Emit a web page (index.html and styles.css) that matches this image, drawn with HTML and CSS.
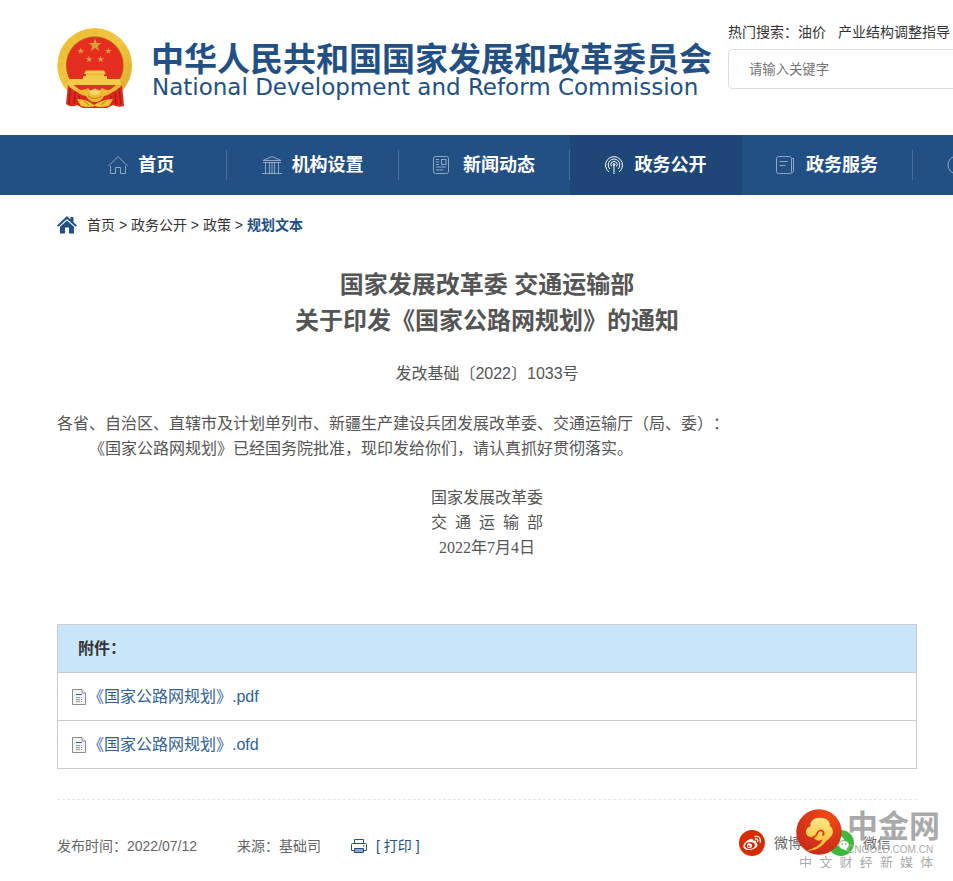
FILE: index.html
```html
<!DOCTYPE html>
<html lang="zh-CN">
<head>
  <meta charset="UTF-8">
  <title>国家公路网规划</title>
  <link rel="stylesheet" href="styles.css">
</head>
<body>
  <header class="header">
    <a class="logo" href="#">
      <svg class="emblem" viewBox="0 0 76 81" aria-hidden="true">
        <defs>
          <linearGradient id="gold" x1="0" y1="0" x2="1" y2="1">
            <stop offset="0" stop-color="#edbb35"/>
            <stop offset=".5" stop-color="#f3c943"/>
            <stop offset="1" stop-color="#d9a425"/>
          </linearGradient>
          <path id="star" d="M0-7 1.6-2.2H6.7L2.6.8 4.1 5.7 0 2.7-4.1 5.7-2.6.8-6.7-2.2H-1.6Z"/>
        </defs>
        <circle cx="37.7" cy="37.5" r="37.4" fill="url(#gold)"/>
        <circle cx="37.7" cy="37.5" r="33" fill="none" stroke="#dda52a" stroke-width="4" stroke-dasharray="5 4 2 6" opacity=".2"/>
        <circle cx="37.8" cy="37.2" r="29" fill="#b8781c"/>
        <circle cx="37.8" cy="37.5" r="28.3" fill="#e62e20"/>
        <g fill="#d9a03a">
          <use href="#star" transform="translate(38 17.3)"/>
          <use href="#star" transform="translate(23.7 23) scale(.5)"/>
          <use href="#star" transform="translate(51.3 23) scale(.5)"/>
          <use href="#star" transform="translate(32 31.3) scale(.5)"/>
          <use href="#star" transform="translate(43.7 31.3) scale(.5)"/>
        </g>
        <path fill="#f3cb48" d="M29 42.5H47L49 46H27ZM29 46H47V48H29ZM26 48H50V51H63L64 57H12L13 51H26Z"/>
        <path d="M29 46.2H48" stroke="#d99a2c" stroke-width=".6"/>
        <path d="M11 57Q16 64 28 66L37.700 67 48 66Q60 64 65 57L67 78Q62 80 56 77L50 80H26L20 77Q14 80 9 76Z" fill="#da281d"/>
        <path d="M13 60 12 76M18 64 17 76M62 60 64 76M58 64 59 76M22 68 25 78M54 68 51 78" stroke="#a91812" stroke-width="1.200"/>
        <path d="M16 60Q25 64 31 60Q35 65 38 60Q41 65 45 60Q51 64 60 60Q53 67 47 68Q44 74 38 74Q32 74 29 68Q22 67 16 60Z" fill="#edb832"/>
        <path d="M32 64Q38 58 44 64L41 67H35Z" fill="#f7d767"/>
        <path d="M31 68Q38 73 45 68" fill="none" stroke="#c77d1c"/>
        <path d="M20 71Q30 71 37 77Q46 71 56 71L52 78Q42 80 38 78Q32 80 24 78Z" fill="#f1c13a"/>
        <path d="M27 73 32 77M49 73 44 77" stroke="#c77d1c"/>
      </svg>
      <span class="logo-text">
        <strong class="logo-cn">中华人民共和国国家发展和改革委员会</strong>
        <span class="logo-en">National Development and Reform Commission</span>
      </span>
    </a>
    <form class="search">
      <div class="hot">热门搜索：<a href="#">油价</a><a href="#">产业结构调整指导</a></div>
      <input class="search-input" type="text" placeholder="请输入关键字" aria-label="请输入关键字">
    </form>
  </header>

  <nav class="nav">
    <ul class="nav-list">
      <li><a href="#">
        <svg class="nav-icon" viewBox="0 0 20 20"><path d="M.5 11 10 1.500 19.500 11M2.500 11V18.500H7.500V12.500H12.500V18.500H17.500V11"/></svg>首页</a></li>
      <li><a href="#">
        <svg class="nav-icon" viewBox="0 0 20 20"><path d="M1 5.500 10 1.500 19 5.500ZM1 7.500H19M0 18.500H20M3.500 8V18M7.500 8V18M10 8V18M12.500 8V18M16.500 8V18"/></svg>机构设置</a></li>
      <li><a href="#">
        <svg class="nav-icon" viewBox="0 0 20 20"><rect x=".5" y="1.500" width="15" height="17" rx="2"/><path d="M3 4.500H6M3 7H6M3 9.500H6M3 12H13M3 15H10"/><rect x="8.500" y="4.500" width="4.500" height="5"/></svg>新闻动态</a></li>
      <li class="active"><a href="#">
        <svg class="nav-icon" viewBox="0 0 20 20"><path d="M5 17A8.500 8.500 0 1 1 15 17M6 14A5.800 5.800 0 1 1 14 14M7.500 11.500A3.200 3.200 0 1 1 12.500 11.500M10 9V19"/><circle cx="10" cy="9.500" r="1"/></svg>政务公开</a></li>
      <li><a href="#">
        <svg class="nav-icon" viewBox="0 0 20 20"><rect x=".5" y="1.500" width="15" height="17" rx="2"/><path d="M3.500 6.500H11.500M3.500 10.500H9.500M16 3.500H17.500V16.500L15.500 18.500"/></svg>政务服务</a></li>
      <li><a href="#" aria-label="互动交流">
        <svg class="nav-icon" viewBox="0 0 20 20"><circle cx="10" cy="10" r="9"/></svg></a></li>
    </ul>
  </nav>

  <main class="main">
    <div class="crumbs">
      <svg class="home-icon" viewBox="0 0 20 18"><path d="M10 0 13.500 3.400V1H16.500V6.200L20 9.600 18.500 10.700 10 3 1.500 10.700 0 9.600Z"/><path d="M10 4.500 17 10.700V17.500H12V11.500H8V17.500H3V10.700Z"/></svg>
      <span><a href="#">首页</a> &gt; <a href="#">政务公开</a> &gt; <a href="#">政策</a> &gt; <a class="current" href="#">规划文本</a></span>
    </div>

    <article>
      <h1 class="title">国家发展改革委 交通运输部<br>关于印发《国家公路网规划》的通知</h1>
      <p class="number">发改基础〔2022〕1033号</p>
      <div class="content">
        <p>各省、自治区、直辖市及计划单列市、新疆生产建设兵团发展改革委、交通运输厅（局、委）：</p>
        <p class="indent">《国家公路网规划》已经国务院批准，现印发给你们，请认真抓好贯彻落实。</p>
        <p class="sign">国家发展改革委<br>交&nbsp; 通&nbsp; 运&nbsp; 输&nbsp; 部<br>2022年7月4日</p>
      </div>
    </article>

    <section class="attach">
      <h2>附件：</h2>
      <ul>
        <li><svg class="file-icon" viewBox="0 0 14 16"><path d="M.5.500H10L13.500 4V15.500H.5Z" fill="#f5f3f1" stroke="#8b8b8b"/><path d="M10 .5V4H13.500" fill="#fff" stroke="#8b8b8b"/><path d="M4 5.500H10" stroke="#2d5fc4"/><path d="M4 8.500H8M9 8.500H10M4 10.500H8M9 10.500H10M4 12.500H8M9 12.500H10" stroke="#999"/></svg><a href="#">《国家公路网规划》.pdf</a></li>
        <li><svg class="file-icon" viewBox="0 0 14 16"><path d="M.5.500H10L13.500 4V15.500H.5Z" fill="#f5f3f1" stroke="#8b8b8b"/><path d="M10 .5V4H13.500" fill="#fff" stroke="#8b8b8b"/><path d="M4 5.500H10" stroke="#2d5fc4"/><path d="M4 8.500H8M9 8.500H10M4 10.500H8M9 10.500H10M4 12.500H8M9 12.500H10" stroke="#999"/></svg><a href="#">《国家公路网规划》.ofd</a></li>
      </ul>
    </section>

    <footer class="info">
      <div class="meta">
        <span>发布时间：2022/07/12</span>
        <span>来源：基础司</span>
        <button class="print" type="button">
          <svg viewBox="0 0 16 16"><path d="M3.500 6V1.500H12.500V6M3 12.500H.500V6.500Q.5 5.500 1.500 5.500H14.500Q15.500 5.500 15.500 6.500V12.500H13"/><path d="M3.500 10.500H12.500V14.500H3.500Z" fill="#8ea7c4"/><path d="M12 8H13.500"/></svg>[ 打印 ]
        </button>
      </div>
      <div class="share">
        <a href="#">
          <svg viewBox="0 0 26 26"><circle cx="13" cy="13" r="13" fill="#d92b00"/><path d="M10.500 9.300C13 8 14.500 9 13.900 10.700 17 9.800 18 11 17 13 19 13.500 19 16 17 17.600 14 20.600 6.500 21 4.600 17.400 3.600 14.500 7 11 10.500 9.300Z" fill="#fff"/><ellipse cx="11" cy="15.500" rx="5" ry="3.500" fill="#d92b00" transform="rotate(-8 11 15.500)"/><circle cx="10.500" cy="15.800" r="2.500" fill="#fff"/><circle cx="9.800" cy="16.300" r="1" fill="#d92b00"/><path d="M16 6.500Q22 5.500 21.300 12M16.300 9Q19.200 8.700 18.700 11.500" fill="none" stroke="#fff" stroke-width="1.300" stroke-linecap="round"/></svg>微博</a>
        <a href="#">
          <svg viewBox="0 0 26 26"><circle cx="13" cy="13" r="13" fill="#3cb93c"/><ellipse cx="10.500" cy="11" rx="6" ry="5" fill="#fff"/><ellipse cx="16" cy="15" rx="5.300" ry="4.500" fill="#fff" stroke="#3cb93c" stroke-width=".8"/><path d="M18 18 19.500 21 15 19Z" fill="#fff"/><g fill="#3cb93c"><circle cx="14.300" cy="14" r=".8"/><circle cx="17.700" cy="14" r=".8"/></g></svg>微信</a>
      </div>
      <div class="watermark">
        <svg class="wm-logo" viewBox="0 0 46 46">
          <defs>
            <radialGradient id="ball" cx=".7" cy=".15" r=".9"><stop offset="0" stop-color="#f04a12"/><stop offset="1" stop-color="#c9291b"/></radialGradient>
            <linearGradient id="cloud" x1="0" y1="0" x2="0" y2="1"><stop offset="0" stop-color="#ffe98a"/><stop offset="1" stop-color="#fbb723"/></linearGradient>
          </defs>
          <circle cx="23" cy="23" r="22.700" fill="url(#ball)"/>
          <path d="M10.500 41.500C18 39.500 25 36 26.500 30.500 23 33 18 31 17.500 28 13 29 9.500 26 10 22.500 10.500 19 12 18 14.500 17.500 13.500 11.500 19 8.500 24 8.700 30 8.700 34.500 12 34 17 37.500 19.500 38 25 34.500 28 33 30 31.500 31 30 32 26 38 19 42.500 10.500 41.500Z" fill="url(#cloud)"/>
          <path d="M17.500 28C22 27.500 20 22.500 24 21.500 27.500 21 28.500 24 27 26" fill="none" stroke="#d23c18" stroke-width="1.800" stroke-linecap="round"/>
        </svg>
        <div class="wm-name">中金网</div>
        <div class="wm-url">CNGOLD.COM.CN</div>
        <div class="wm-slogan">中&nbsp; 文&nbsp; 财&nbsp; 经&nbsp; 新&nbsp; 媒&nbsp; 体</div>
      </div>
    </footer>
  </main>
</body>
</html>
```
FILE: styles.css
```css
* {
  box-sizing: border-box;
}

body {
  margin: 0;
  background: #fff;
  color: #333;
  font-family: "Liberation Sans", "Noto Sans CJK SC", sans-serif;
  font-size: 14px;
  line-height: 20px;
  text-spacing-trim: space-all;
}

a {
  color: inherit;
  text-decoration: none;
}

ul,
p,
h1,
h2 {
  margin: 0;
  padding: 0;
  list-style: none;
}

/* header */
.header {
  display: flex;
  gap: 16px;
  padding: 22px 0 26px 57px;
  overflow: hidden;
}

.logo {
  display: flex;
  flex: none;
  gap: 18px;
  padding-top: 6px;
  color: #225084;
}

.emblem {
  width: 76px;
  height: 81px;
}

.logo-text {
  display: flex;
  flex-direction: column;
  padding-top: 14px;
  white-space: nowrap;
}

.logo-cn {
  font-size: 33px;
  line-height: 36px;
}

.logo-en {
  padding-left: 1px;
  font-family: "DejaVu Sans", sans-serif;
  font-size: 23px;
  line-height: 18px;
}

.search {
  flex: none;
  width: 360px;
}

.hot {
  margin-bottom: 7px;
  white-space: nowrap;
}

.hot a {
  margin-right: 12px;
}

.search-input {
  width: 100%;
  height: 40px;
  padding: 0 20px;
  border: 1px solid #ddd;
  border-radius: 4px;
  font-family: inherit;
}

.search-input::placeholder {
  color: #757575;
}

/* nav */
.nav {
  padding-left: 56px;
  background: #225084;
  overflow: hidden;
}

.nav-list {
  display: grid;
  grid-template-columns: repeat(7, 1fr);
  width: 1200px;
}

.nav a {
  display: flex;
  align-items: center;
  justify-content: center;
  gap: 10px;
  height: 30px;
  margin: 15px 0;
  border-right: 1px solid #4a7099;
  color: #fff;
  font-size: 18px;
  font-weight: bold;
}

.nav .active {
  background: #1e4777;
}

.nav .active a,
.nav li:last-child a {
  border-color: transparent;
}

.nav li:last-child a {
  justify-content: flex-start;
  padding-left: 34px;
}

.nav-icon {
  width: 20px;
  height: 20px;
  fill: none;
  stroke: #91a8c2;
}

.active .nav-icon {
  stroke: #fff;
}

/* article */
.main {
  padding: 20px 36px 12px 57px;
}

.crumbs {
  display: flex;
  align-items: center;
  gap: 10px;
}

.home-icon {
  width: 20px;
  height: 18px;
  fill: #225084;
}

.current {
  color: #225084;
  font-weight: bold;
}

.title {
  margin-top: 32px;
  color: #555;
  font-size: 24px;
  line-height: 36px;
  text-align: center;
}

.number {
  margin-top: 23px;
  color: #555;
  font-size: 16px;
  line-height: 24px;
  text-align: center;
}

.content {
  margin-top: 25px;
  color: #555;
  font-family: "Liberation Serif", "Noto Sans CJK SC", serif;
  font-size: 16px;
  line-height: 25px;
}

.indent {
  text-indent: 2em;
}

.sign {
  margin-top: 24px;
  text-align: center;
}

/* attachments */
.attach {
  margin-top: 64px;
  border: 1px solid #ccc;
  font-size: 16px;
}

.attach h2 {
  padding: 12px 20px 11px;
  background: #c9e5fa;
  font-size: 16px;
  line-height: 24px;
}

.attach li {
  display: flex;
  align-items: center;
  padding: 12px 14px 11px;
  border-top: 1px solid #ccc;
  color: #2f5f99;
  line-height: 24px;
}

.file-icon {
  width: 14px;
  height: 16px;
  margin-right: 2px;
}

/* publish info */
.info {
  display: flex;
  align-items: center;
  position: relative;
  margin-top: 30px;
  padding-top: 30px;
  border-top: 1px dashed #e5e5e5;
  color: #666;
}

.meta {
  display: flex;
  align-items: center;
  padding-top: 6px;
}

.meta span {
  margin-right: 40px;
}

.print {
  display: flex;
  align-items: center;
  gap: 9px;
  margin-left: -10px;
  padding: 0;
  border: 0;
  background: none;
  color: #225084;
  font: inherit;
}

.print svg {
  width: 16px;
  height: 16px;
  fill: none;
  stroke: #225084;
}

.share {
  display: flex;
  gap: 26px;
  margin-left: auto;
  padding-right: 26px;
}

.share a {
  display: flex;
  align-items: center;
  gap: 9px;
}

.share svg {
  width: 26px;
  height: 26px;
}

.watermark {
  display: grid;
  grid-template-columns: 46px 1fr;
  column-gap: 5px;
  position: absolute;
  top: 9px;
  right: -23px;
  color: #aaa;
  white-space: nowrap;
}

.wm-logo {
  grid-row: span 2;
  width: 46px;
  height: 46px;
}

.wm-name {
  font-size: 31px;
  font-weight: bold;
  line-height: 36px;
}

.wm-url {
  font-size: 10px;
  line-height: 10px;
}

.wm-slogan {
  grid-column: span 2;
  padding-left: 3px;
  font-size: 13px;
  line-height: 16px;
}
```
